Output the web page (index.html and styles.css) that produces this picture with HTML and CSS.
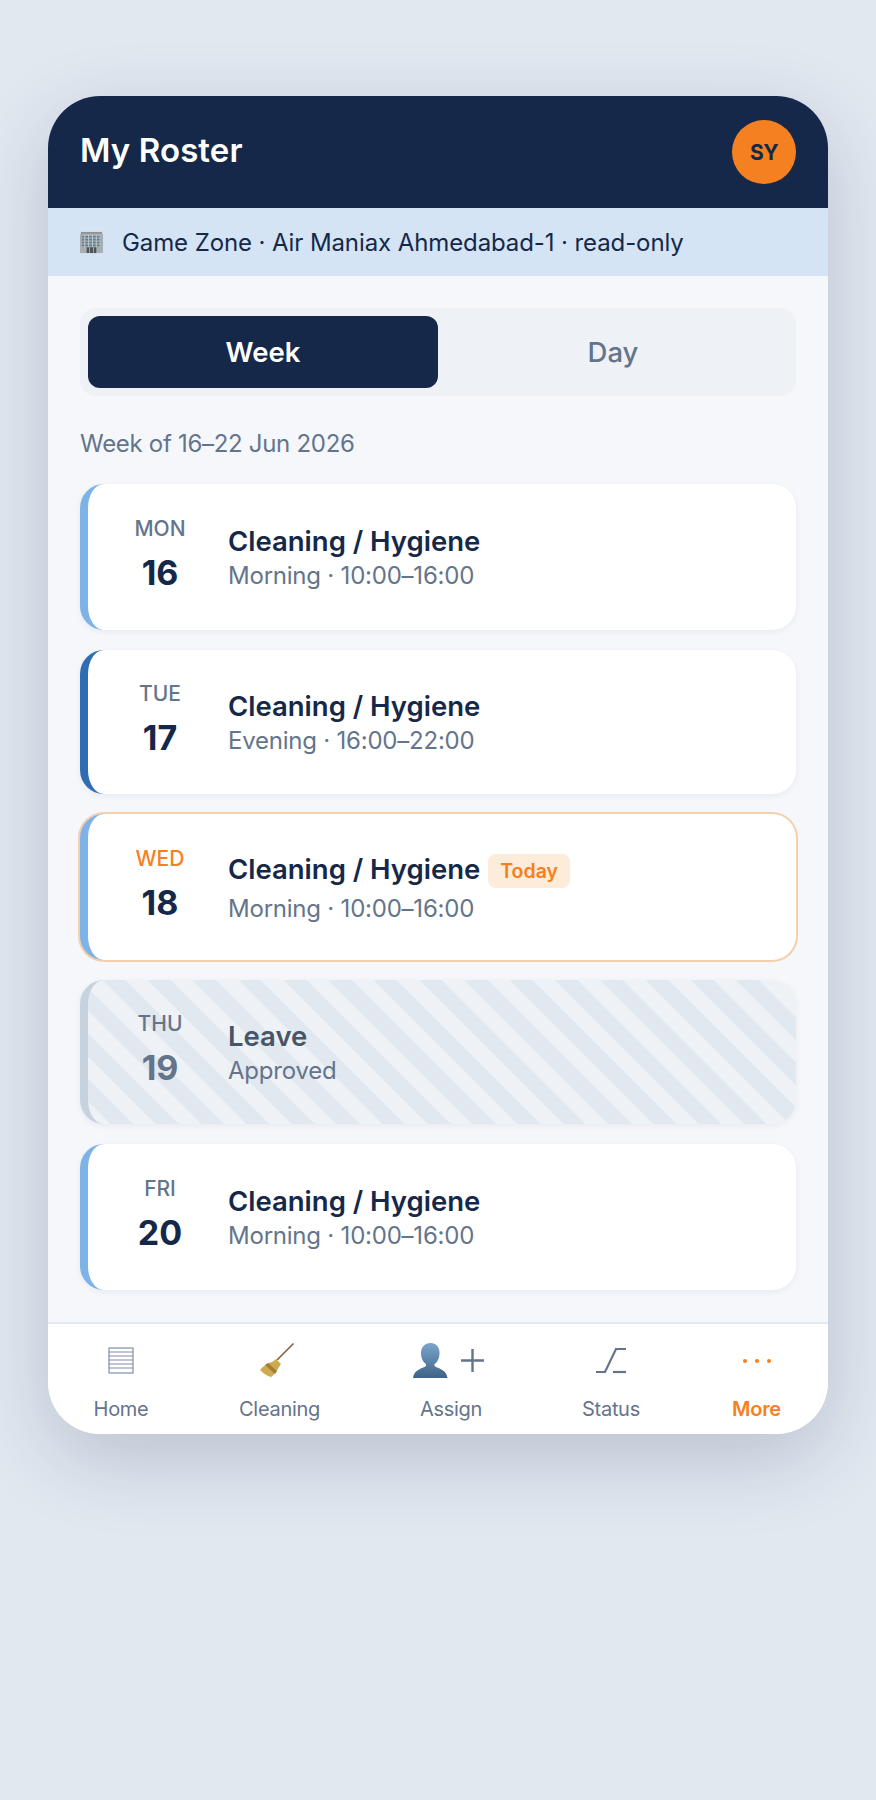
FILE: index.html
```html
<!DOCTYPE html>
<html>
<head>
    <title>My Roster</title>
    <link rel="stylesheet" href="styles.css">
</head>
<body>
    <div class="phone">
        <div class="app-header">
            <div class="app-title">My Roster</div>
            <div class="avatar">SY</div>
        </div>
        <div class="context-bar">
            <svg class="context-icon" viewBox="0 0 24 24">
                <rect x="1" y="1" width="22" height="2" fill="#8e9190"/>
                <rect x="0" y="3" width="24" height="20" fill="#a7adb0"/>
                <path d="M2 6h20M2 9h20M2 12h20M2 15h20" stroke="#5d7f96" stroke-width="1.6"/>
                <path d="M5 4v13M9 4v13M13 4v13M17 4v13M21 4v13" stroke="#c4c9cb" stroke-width="1"/>
                <rect x="7" y="17" width="10" height="6" fill="#4b5357"/>
                <path d="M10 17v6M14 17v6" stroke="#a7adb0" stroke-width="1"/>
            </svg>
            <span>Game Zone · Air Maniax Ahmedabad-1 · read-only</span>
        </div>
        <div class="content">
            <div class="toggle">
                <div class="toggle-btn active">Week</div>
                <div class="toggle-btn">Day</div>
            </div>
            <div class="week-label">Week of 16–22 Jun 2026</div>
            <div class="shift-list">
                <div class="shift morning">
                    <div class="day"><div class="day-name">MON</div><div class="day-num">16</div></div>
                    <div class="info">
                        <div class="info-title">Cleaning / Hygiene</div>
                        <div class="info-sub">Morning · 10:00–16:00</div>
                    </div>
                </div>
                <div class="shift evening">
                    <div class="day"><div class="day-name">TUE</div><div class="day-num">17</div></div>
                    <div class="info">
                        <div class="info-title">Cleaning / Hygiene</div>
                        <div class="info-sub">Evening · 16:00–22:00</div>
                    </div>
                </div>
                <div class="shift morning today">
                    <div class="day"><div class="day-name">WED</div><div class="day-num">18</div></div>
                    <div class="info">
                        <div class="info-title">Cleaning / Hygiene <span class="badge">Today</span></div>
                        <div class="info-sub">Morning · 10:00–16:00</div>
                    </div>
                </div>
                <div class="shift leave">
                    <div class="day"><div class="day-name">THU</div><div class="day-num">19</div></div>
                    <div class="info">
                        <div class="info-title">Leave</div>
                        <div class="info-sub">Approved</div>
                    </div>
                </div>
                <div class="shift morning">
                    <div class="day"><div class="day-name">FRI</div><div class="day-num">20</div></div>
                    <div class="info">
                        <div class="info-title">Cleaning / Hygiene</div>
                        <div class="info-sub">Morning · 10:00–16:00</div>
                    </div>
                </div>
            </div>
        </div>
        <div class="bottom-nav">
            <div class="nav-item home">
                <svg class="nav-icon" width="26" height="36" viewBox="0 0 26 36" fill="none" stroke="#7f8ea6" stroke-width="1.2">
                    <rect x="1" y="6" width="24" height="25"/>
                    <path d="M1 10h24M1 14h24M1 18h24M1 22h24M1 26h24"/>
                </svg>
                <span>Home</span>
            </div>
            <div class="nav-item cleaning">
                <svg class="nav-icon" width="39" height="36" viewBox="0 0 39 36" fill="none">
                    <path d="M33.5 1.5L17 18" stroke="#8a5a3c" stroke-width="1.6"/>
                    <path d="M16 17l5 5c-1 1-1 2-2 3-2 4-5 8-8 10-4-1-8-4-11-7 3-4 8-7 12-8 2-1 3-2 4-3z" fill="#cda950"/>
                    <path d="M5 23l10 9 2-3-9-8z" fill="#a07f36"/>
                </svg>
                <span>Cleaning</span>
            </div>
            <div class="nav-item assign">
                <svg class="nav-icon" width="77" height="36" viewBox="0 0 77 36" fill="none">
                    <defs>
                        <linearGradient id="personFill" x1="0" y1="0" x2="0" y2="1">
                            <stop offset="0" stop-color="#7ba6cc"/>
                            <stop offset="1" stop-color="#3e6288"/>
                        </linearGradient>
                    </defs>
                    <path d="M17.500 1c6 0 9 4.500 9 10 0 5-2 9-5 11v2c2 2 12 3 13 12H0c1-9 11-10 13-12v-2c-3-2-5-6-5-11 0-5.500 3.500-10 9.500-10z" fill="url(#personFill)"/>
                    <path d="M59.500 7v23M48 18.500h23" stroke="#64748b" stroke-width="2.4"/>
                </svg>
                <span>Assign</span>
            </div>
            <div class="nav-item status">
                <svg class="nav-icon" width="30" height="36" viewBox="0 0 30 36" fill="none" stroke="#64748b" stroke-width="2.2">
                    <path d="M0 30h9L20 7h10"/>
                    <path d="M17 30h13"/>
                </svg>
                <span>Status</span>
            </div>
            <div class="nav-item more active">
                <svg class="nav-icon" width="30" height="36" viewBox="0 0 30 36" fill="#f97f1e">
                    <circle cx="3" cy="19" r="2"/>
                    <circle cx="15" cy="19" r="2"/>
                    <circle cx="27" cy="19" r="2"/>
                </svg>
                <span>More</span>
            </div>
        </div>
    </div>
</body>
</html>
```

FILE: styles.css
```css
body {
    margin: 0;
    height: 1800px;
    background: #e2e8f0;
    font-family: Inter, "Liberation Sans", sans-serif;
    color: #152849;
    overflow: hidden;
}

.phone {
    width: 780px;
    margin: 96px auto 0;
    border-radius: 52px;
    overflow: hidden;
    background: #f5f7fb;
    box-shadow: 0 24px 80px rgba(21, 40, 73, 0.2);
}

.app-header {
    height: 112px;
    padding: 0 32px;
    display: flex;
    justify-content: space-between;
    align-items: center;
    background: #152849;
    color: white;
}

.app-title {
    padding-bottom: 4px;
    font-size: 33px;
    font-weight: 600;
    letter-spacing: 0.1px;
}

.avatar {
    width: 64px;
    height: 64px;
    border-radius: 50%;
    display: flex;
    justify-content: center;
    align-items: center;
    background: #f58020;
    color: #152849;
    font-size: 21px;
    font-weight: 700;
    letter-spacing: -0.5px;
}

.context-bar {
    height: 68px;
    padding: 0 32px;
    display: flex;
    align-items: center;
    gap: 19px;
    background: #d4e4f4;
    font-size: 24px;
    letter-spacing: -0.1px;
}

.context-icon {
    width: 23px;
    height: 23px;
}

.content {
    padding: 32px 32px 32px;
}

.toggle {
    display: flex;
    padding: 8px;
    background: #eef1f6;
    border-radius: 16px;
}

.toggle-btn {
    flex: 1;
    height: 72px;
    line-height: 72px;
    text-align: center;
    border-radius: 12px;
    font-size: 27.5px;
    font-weight: 500;
    color: #64748b;
}

.toggle-btn.active {
    background: #152849;
    color: white;
    font-weight: 600;
}

.week-label {
    margin: 34px 0 26px;
    font-size: 24px;
    line-height: 28px;
    letter-spacing: -0.3px;
    color: #64748b;
}

.shift-list {
    display: flex;
    flex-direction: column;
    gap: 20px;
}

.shift {
    height: 146px;
    box-sizing: border-box;
    display: flex;
    align-items: center;
    border-left: 8px solid #7eb3e8;
    border-radius: 24px;
    background: white;
    box-shadow: 0 2px 6px rgba(21, 40, 73, 0.06);
}

.shift:nth-child(even) {
    height: 144px;
}

.shift.evening {
    border-left-color: #2e6db4;
}

.shift.today {
    box-shadow: 0 0 0 2px #f3cfae;
}

.shift.leave {
    border-left-color: #c5d2e0;
    background: repeating-linear-gradient(45deg, #eef1f6 0 16px, #e2e8f0 16px 32px);
}

.day {
    width: 144px;
    margin-right: -4px;
    padding-bottom: 4px;
    text-align: center;
}

.day-name {
    font-size: 21px;
    line-height: 28px;
    font-weight: 500;
    color: #64748b;
}

.day-num {
    margin-top: 8px;
    font-size: 34px;
    line-height: 44px;
    font-weight: 700;
}

.today .day-name {
    color: #f97f1e;
}

.leave .day-num {
    color: #64748b;
}

.info-title {
    margin-bottom: 2px;
    font-size: 27.5px;
    line-height: 36px;
    font-weight: 600;
    display: flex;
    align-items: center;
    gap: 8px;
}

.today .info-title {
    margin-bottom: 6px;
}

.leave .info-title {
    color: #475569;
}

.info-sub {
    font-size: 24px;
    line-height: 30px;
    letter-spacing: -0.22px;
    color: #64748b;
}

.badge {
    margin-top: 4px;
    padding: 0 12px;
    height: 34px;
    line-height: 34px;
    border-radius: 8px;
    background: #fdecd9;
    color: #f97f1e;
    font-size: 19.5px;
    font-weight: 600;
}

.bottom-nav {
    height: 110px;
    display: grid;
    grid-template-columns: 146px 171px 172px 148px 1fr;
    border-top: 2px solid #e2e8f0;
    background: white;
}

.nav-item {
    display: flex;
    flex-direction: column;
    align-items: center;
    padding-top: 18px;
    font-size: 20px;
    letter-spacing: -0.3px;
    color: #64748b;
}

.nav-icon {
    margin-bottom: 19px;
}

.nav-item.active {
    color: #f97f1e;
    font-weight: 600;
}
```
